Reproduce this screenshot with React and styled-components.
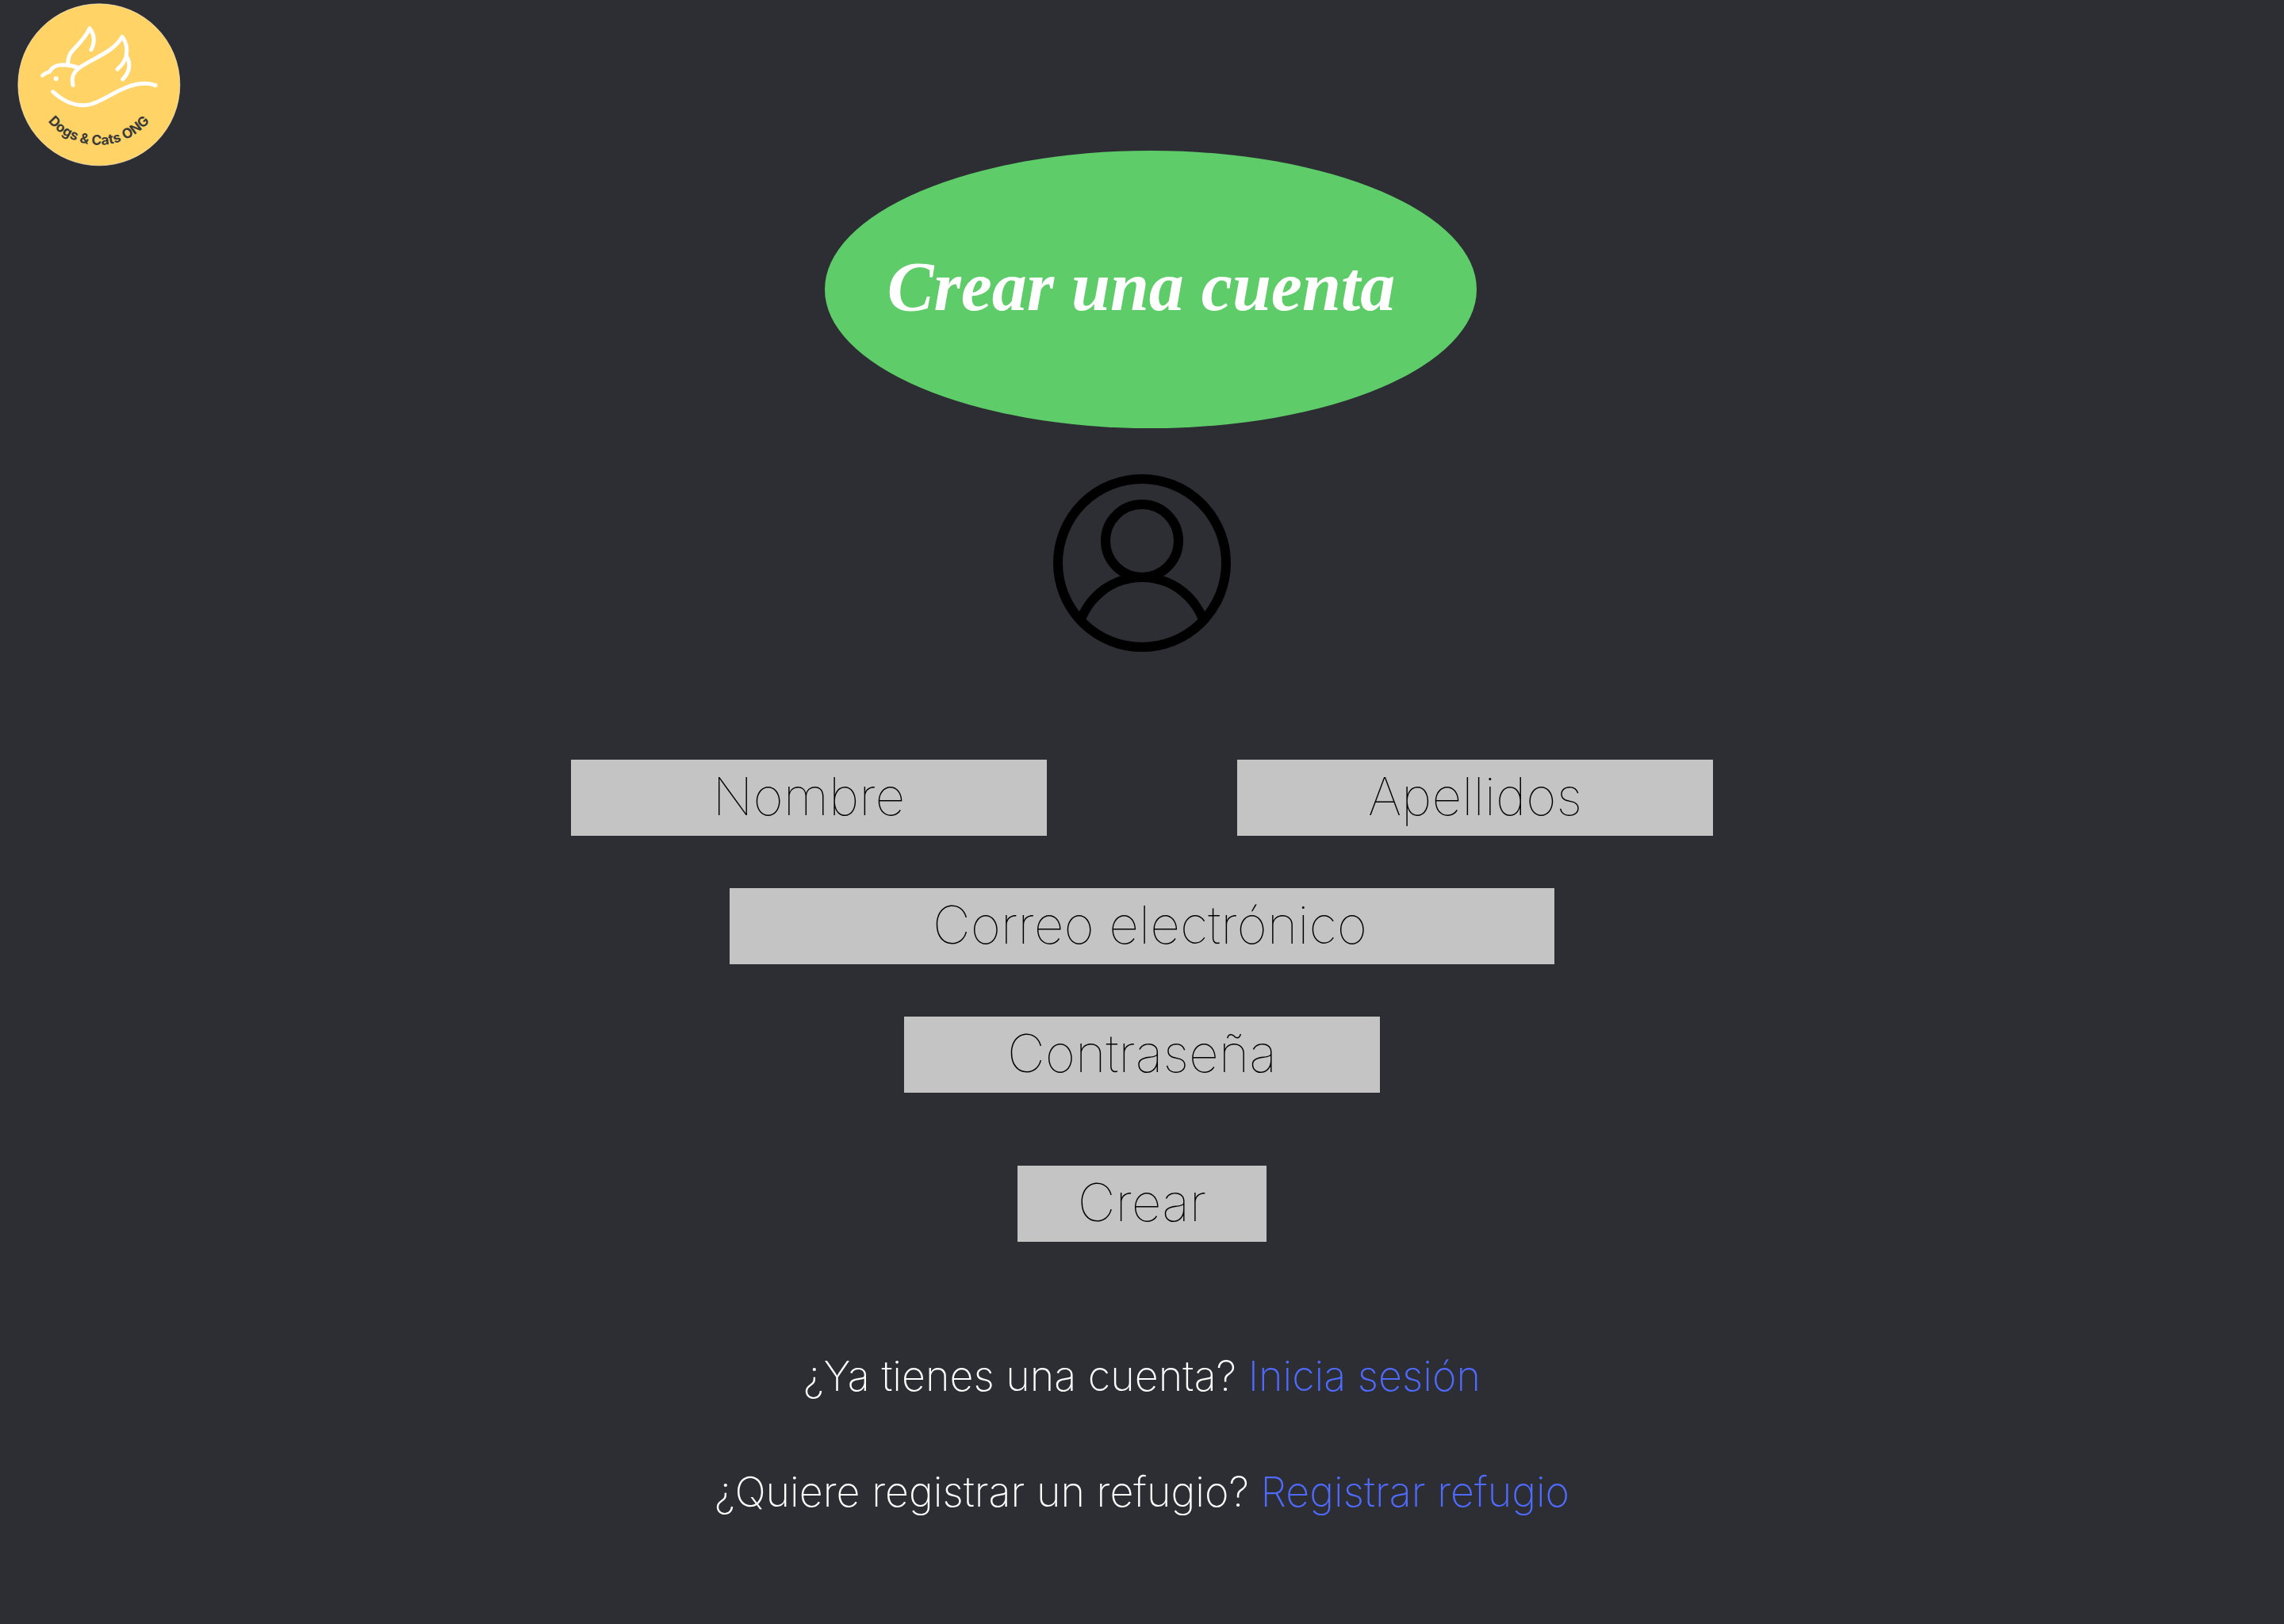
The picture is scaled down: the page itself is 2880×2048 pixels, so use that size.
import React from "react";
import styled, { createGlobalStyle } from "styled-components";

const GlobalStyle = createGlobalStyle`
  *, *::before, *::after { box-sizing: border-box; }
  body {
    margin: 0;
    background: #2d2e33;
    color: #ffffff;
    font-family: Inter, "Liberation Sans", sans-serif;
    font-weight: 200;
  }
`;

const Page = styled.div`
  min-height: 100vh;
  display: flex;
  flex-direction: column;
  align-items: center;
  padding-bottom: 80px;
`;

const Header = styled.header`
  width: 100%;
  display: grid;
  grid-template-columns: 1fr auto 1fr;
  align-items: start;
  padding: 4px 0 0 22px;
`;

const LogoLink = styled.a`
  display: block;
  width: 206px;
  height: 206px;
`;

const TitleBadge = styled.div`
  display: flex;
  align-items: center;
  justify-content: center;
  width: 822px;
  height: 350px;
  margin-top: 186px;
  padding: 0 24px 6px 0;
  border-radius: 50%;
  background: #5ecc69;
`;

const Title = styled.h1`
  margin: 0;
  font: italic bold 88px/112px "Liberation Serif", serif;
  color: #ffffff;
`;

const Main = styled.main`
  width: 100%;
  display: flex;
  flex-direction: column;
  align-items: center;
  padding-top: 58px;
`;

const Form = styled.form`
  width: 100%;
  display: flex;
  flex-direction: column;
  align-items: center;
  gap: 66px;
  margin-top: 136px;
`;

const NameRow = styled.div`
  display: flex;
  flex-wrap: wrap;
  justify-content: center;
  gap: 66px 240px;
`;

const Field = styled.input`
  width: ${({ $wide }) => ($wide ? 1040 : 600)}px;
  max-width: 100%;
  height: 96px;
  padding: 0 0 4px ${({ $wide }) => ($wide ? 20 : 0)}px;
  border: 0;
  border-radius: 0;
  background: #c4c4c4;
  color: #000000;
  font: inherit;
  font-size: 66px;
  font-weight: 100;
  text-align: center;

  &::placeholder {
    color: #000000;
    opacity: 1;
  }
`;

const SubmitButton = styled.button`
  width: 314px;
  height: 96px;
  margin-top: 26px;
  padding: 0 0 4px;
  border: 0;
  background: #c4c4c4;
  color: #000000;
  font: inherit;
  font-size: 66px;
  font-weight: 100;
  cursor: pointer;
`;

const Links = styled.nav`
  display: flex;
  flex-direction: column;
  align-items: center;
  gap: 86px;
  margin-top: 140px;
`;

const Prompt = styled.p`
  margin: 0;
  font-size: 52px;
  line-height: 60px;
  text-align: center;
`;

const PromptLink = styled.a`
  color: #4f6bff;
  text-decoration: none;
`;

function Logo() {
  return (
    <svg viewBox="67 11 618 618" width="206" height="206" role="img" aria-label="Dogs & Cats ONG">
      <circle cx="375.5" cy="319.5" r="306" fill="#ffd366" stroke="#fff0cc" strokeWidth="2" />
      <g fill="none" stroke="#ffffff" strokeWidth="15" strokeLinecap="round" strokeLinejoin="round">
        <path d="M162 284 Q172 275 188 271 C198 250 214 245 236 244 Q268 244 300 256" />
        <path d="M258 240 C258 221 262 205 275 191 C300 164 326 139 340 106 C360 132 360 160 346 187" />
        <path d="M277 321 C270 296 278 272 300 256 C353 219 432 195 463 138 C482 161 483 187 478 213 C472 232 461 248 445 261" />
        <path d="M480 213 C497 239 491 274 465 299" />
        <path d="M201 346 C236 378 270 397 317 397 C386 397 456 315 550 315 Q572 315 589 322" />
      </g>
      <circle cx="213" cy="297" r="9" fill="#ffffff" />
      <path id="logo-arc" d="M138 383 A253 253 0 0 0 612 383" fill="none" />
      <text fill="#3a3a38" fontFamily="Inter, sans-serif" fontWeight="700" fontSize="52" textAnchor="middle">
        <textPath href="#logo-arc" startOffset="50%">Dogs &amp; Cats ONG</textPath>
      </text>
    </svg>
  );
}

function Avatar() {
  return (
    <svg width="224" height="224" viewBox="0 0 224 224" fill="none" stroke="#000000" strokeWidth="12" aria-hidden="true">
      <clipPath id="avatar-clip">
        <circle cx="112" cy="112" r="106" />
      </clipPath>
      <circle cx="112" cy="112" r="106" />
      <circle cx="112" cy="84" r="46" />
      <circle cx="112" cy="212" r="82" clipPath="url(#avatar-clip)" />
    </svg>
  );
}

export default function App() {
  return (
    <>
      <GlobalStyle />
      <Page>
        <Header>
          <LogoLink href="#inicio">
            <Logo />
          </LogoLink>
          <TitleBadge>
            <Title>Crear una cuenta</Title>
          </TitleBadge>
        </Header>
        <Main>
          <Avatar />
          <Form onSubmit={(event) => event.preventDefault()}>
            <NameRow>
              <Field type="text" name="nombre" placeholder="Nombre" aria-label="Nombre" />
              <Field type="text" name="apellidos" placeholder="Apellidos" aria-label="Apellidos" />
            </NameRow>
            <Field $wide type="email" name="correo" placeholder="Correo electrónico" aria-label="Correo electrónico" />
            <Field type="password" name="contrasena" placeholder="Contraseña" aria-label="Contraseña" />
            <SubmitButton type="submit">Crear</SubmitButton>
          </Form>
          <Links aria-label="Otras opciones">
            <Prompt>
              ¿Ya tienes una cuenta? <PromptLink href="#iniciar-sesion">Inicia sesión</PromptLink>
            </Prompt>
            <Prompt>
              ¿Quiere registrar un refugio? <PromptLink href="#registrar-refugio">Registrar refugio</PromptLink>
            </Prompt>
          </Links>
        </Main>
      </Page>
    </>
  );
}
